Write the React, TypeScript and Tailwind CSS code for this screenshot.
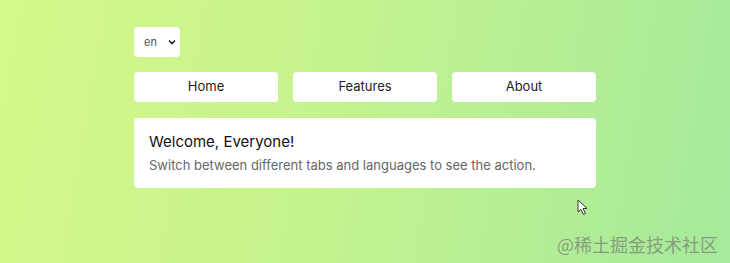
import React from "react";

export default function App() {
  return (
    <div
      className="relative w-[730px] h-[263px] overflow-hidden bg-[linear-gradient(100deg,#d6f889_0%,#c4f38e_45%,#a5e99b_100%)]"
      style={{ fontFamily: "Inter, 'Noto Sans', sans-serif" }}
    >
      <div className="w-[462px] ml-[134px] pt-[27px] flex flex-col">
        <div className="w-[46px] h-[30px] bg-white rounded-[4px] flex items-center pl-[10px] pr-[3px] justify-between">
          <span className="text-[11px] text-[#555]">en</span>
          <svg width="10" height="10" viewBox="0 0 10 10">
            <path d="M2 3.5 L5 6.5 L8 3.5" fill="none" stroke="#222" strokeWidth="1.6" />
          </svg>
        </div>
        <div className="mt-[15px] grid grid-cols-3 gap-[15px]">
          {["Home", "Features", "About"].map((t) => (
            <div
              key={t}
              className="h-[30px] bg-white rounded-[4px] flex items-center justify-center text-[13px] text-[#222]"
            >
              {t}
            </div>
          ))}
        </div>
        <div className="mt-[16px] h-[70px] bg-white rounded-[4px] px-[15px] pt-[14px]">
          <div className="text-[15px] leading-[20px] text-[#111]">Welcome, Everyone!</div>
          <div className="mt-[4px] text-[13px] leading-[18px] text-[#666]">
            Switch between different tabs and languages to see the action.
          </div>
        </div>
      </div>
      <svg className="absolute left-[577px] top-[199px]" width="12" height="17" viewBox="0 0 12 17">
        <path d="M1 1 L1 13 L4 10.5 L6.5 15.5 L8.5 14.5 L6 9.5 L10 9.5 Z" fill="white" stroke="#333" strokeWidth="1" strokeLinejoin="round" />
      </svg>
      <div
        className="absolute left-[557px] top-[232px] text-[18px] leading-[24px] text-[#7d8f79]/85"
        style={{ fontFamily: "'Noto Sans CJK SC', sans-serif" }}
      >
        @稀土掘金技术社区
      </div>
    </div>
  );
}
